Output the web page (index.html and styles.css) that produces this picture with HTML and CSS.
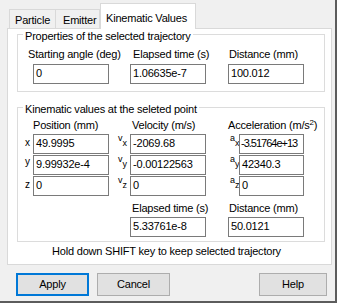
FILE: index.html
```html
<!DOCTYPE html>
<html>
<head>
<meta charset="utf-8">
<link rel="stylesheet" href="styles.css">
</head>
<body>
<div class="dialog">
  <div class="tabs">
    <div class="tab tab-particle">Particle</div>
    <div class="tab tab-emitter">Emitter</div>
    <div class="tab tab-active">Kinematic Values</div>
  </div>
  <div class="panel">
    <div class="group group-traj">
      <div class="group-title">Properties of the selected trajectory</div>
      <div class="grid grid-traj">
        <div class="lbl lbl-start">Starting angle (deg)</div>
        <div class="lbl lbl-mid">Elapsed time (s)</div>
        <div class="lbl lbl-right">Distance (mm)</div>
        <div class="edit c-pos">0</div>
        <div class="edit c-vel">1.06635e-7</div>
        <div class="edit c-wide">100.012</div>
      </div>
    </div>
    <div class="group group-kin">
      <div class="group-title">Kinematic values at the seleted point</div>
      <div class="grid grid-kin">
        <div class="lbl head c-pos">Position (mm)</div>
        <div class="lbl head lbl-vel">Velocity (m/s)</div>
        <div class="lbl head lbl-acc">Acceleration (m/s<sup>2</sup>)</div>

        <div class="sym sym-pos">x</div>
        <div class="edit c-pos">49.9995</div>
        <div class="sym sym-vel">v<sub>x</sub></div>
        <div class="edit c-vel">-2069.68</div>
        <div class="sym sym-acc">a<sub>x</sub></div>
        <div class="edit c-acc tight">-3.51764e+13</div>

        <div class="sym sym-pos sym-y">y</div>
        <div class="edit c-pos">9.99932e-4</div>
        <div class="sym sym-vel">v<sub>y</sub></div>
        <div class="edit c-vel">-0.00122563</div>
        <div class="sym sym-acc">a<sub>y</sub></div>
        <div class="edit c-acc">42340.3</div>

        <div class="sym sym-pos">z</div>
        <div class="edit c-pos">0</div>
        <div class="sym sym-vel">v<sub>z</sub></div>
        <div class="edit c-vel">0</div>
        <div class="sym sym-acc">a<sub>z</sub></div>
        <div class="edit c-acc">0</div>

        <div class="lbl lower lbl-vel">Elapsed time (s)</div>
        <div class="lbl lower lbl-right">Distance (mm)</div>
        <div class="edit c-vel">5.33761e-8</div>
        <div class="edit c-wide">50.0121</div>
      </div>
    </div>
    <div class="hint">Hold down SHIFT key to keep selected trajectory</div>
  </div>
  <div class="buttons">
    <button class="btn btn-default">Apply</button>
    <button class="btn btn-cancel">Cancel</button>
    <button class="btn btn-help">Help</button>
  </div>
</div>
</body>
</html>
```
FILE: styles.css
```css
* {
  box-sizing: border-box;
}

html,
body {
  margin: 0;
  padding: 0;
  background: #ffffff;
}

body {
  font-family: "Liberation Sans", Arial, sans-serif;
  font-size: 11px;
  line-height: 13px;
  color: #000000;
  letter-spacing: -0.2px;
}

.dialog {
  width: 337px;
  height: 303px;
  background: #f0f0f0;
  border-right: 2px solid #5c5c5c;
  border-bottom: 2px solid #5c5c5c;
}

/* ---------- tabs ---------- */
.tabs {
  display: flex;
  align-items: flex-end;
  height: 28px;
  padding-left: 9px;
}

.tab {
  height: 19px;
  padding-top: 4px;
  background: #f0f0f0;
  border: 1px solid #d9d9d9;
  border-bottom: none;
  white-space: nowrap;
}

.tab-particle {
  width: 47px;
  padding-left: 5px;
}

.tab-emitter {
  width: 44px;
  padding-left: 7px;
  border-left: none;
}

.tab-active {
  position: relative;
  z-index: 1;
  width: 96px;
  height: 26px;
  padding-top: 8px;
  padding-left: 5px;
  margin-bottom: -1px;
  background: #ffffff;
}

/* ---------- panel ---------- */
.panel {
  width: 325px;
  height: 237px;
  margin-left: 7px;
  padding: 5px 6px 0 9px;
  background: #ffffff;
  border: 1px solid #d9d9d9;
}

.group {
  border: 1px solid #dcdcdc;
}

.group-traj {
  padding-bottom: 7px;
}

.group-kin {
  margin-top: 15px;
  padding-bottom: 4px;
}

.group-title {
  width: fit-content;
  margin: -5px 0 0 5px;
  padding: 0 2px;
  background: #ffffff;
  white-space: nowrap;
}

.grid {
  display: grid;
  grid-template-columns: 15px 76px 21px 76px 33px 65px;
  row-gap: 1px;
}

.grid-traj {
  margin-top: 5px;
}

.grid-traj .lbl {
  margin-bottom: 2px;
}

.grid-kin {
  margin-top: 3px;
}

.lbl {
  white-space: nowrap;
}

.lbl-start {
  grid-column: 1 / 4;
  margin-left: 10px;
}

.lbl-mid {
  grid-column: 4 / 5;
  margin-left: 3px;
}

.lbl-right {
  grid-column: 5 / 7;
  margin-left: 23px;
}

.lbl-vel {
  grid-column: 4 / 5;
  margin-left: 2px;
}

.lbl-acc {
  grid-column: 5 / 7;
  margin-left: 22px;
}

.head {
  margin-bottom: 1px;
}

.lower {
  margin-top: 5px;
  margin-bottom: 1px;
}

.lbl sup {
  font-size: 8px;
  line-height: 0;
  vertical-align: 4px;
}

/* ---------- edits ---------- */
.edit {
  height: 20px;
  padding: 0 2px 2px;
  line-height: 16px;
  background: #ffffff;
  border: 1px solid #7a7a7a;
  white-space: nowrap;
  overflow: hidden;
}

.edit.tight {
  padding-left: 1px;
  letter-spacing: -1px;
}

.c-pos {
  grid-column: 2 / 3;
}

.c-vel {
  grid-column: 4 / 5;
}

.c-acc {
  grid-column: 6 / 7;
}

.c-wide {
  grid-column: 5 / 7;
  margin-left: 22px;
}

/* ---------- symbols ---------- */
.sym {
  height: 20px;
  font-size: 9px;
  line-height: 9px;
  letter-spacing: 0;
  white-space: nowrap;
}

.sym sub {
  font-size: 9px;
  line-height: 0;
  vertical-align: -5px;
}

.sym-pos {
  grid-column: 1 / 2;
  padding-left: 7px;
  padding-top: 4px;
  font-size: 10px;
  line-height: 10px;
}

.sym-y {
  padding-top: 2px;
}

.sym-vel {
  grid-column: 3 / 4;
  padding-left: 9px;
}

.sym-acc {
  grid-column: 5 / 6;
  padding-left: 24px;
}

/* ---------- hint ---------- */
.hint {
  margin: 3px 0 0 -9px;
  text-align: center;
  white-space: nowrap;
}

/* ---------- buttons ---------- */
.buttons {
  display: flex;
  margin-top: 8px;
  padding: 0 8px 0 16px;
}

.btn {
  width: 73px;
  height: 23px;
  padding: 0;
  font: inherit;
  letter-spacing: inherit;
  color: #000000;
  background: #e1e1e1;
  border: 1px solid #adadad;
}

.btn-default {
  border: 2px solid #0078d7;
}

.btn-cancel {
  margin-left: 8px;
}

.btn-help {
  width: 68px;
  margin-left: auto;
}
```
